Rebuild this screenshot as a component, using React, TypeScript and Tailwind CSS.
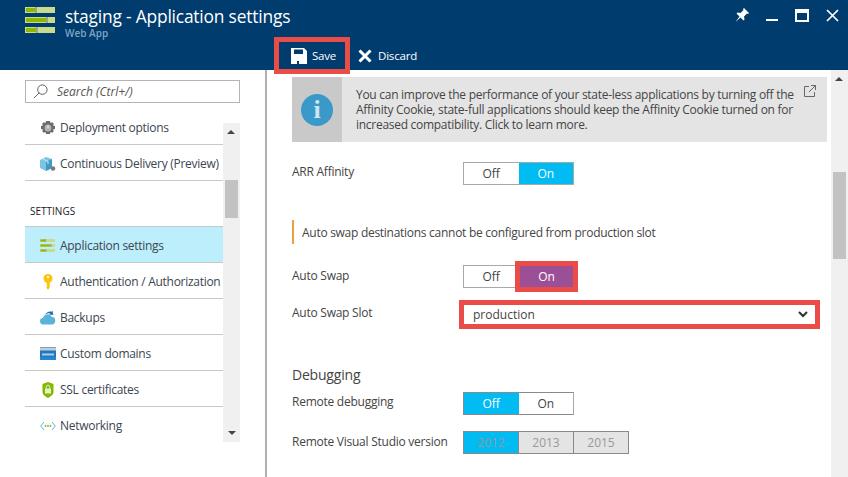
import { ReactNode } from "react";

const FONT = "font-['Open_Sans','Noto_Sans',sans-serif]";

function BarsIcon({ className }: { className: string }) {
    return (
        <svg viewBox="0 0 30 26" className={className}>
            <rect x="0" y="0" width="30" height="6" fill="#c9dc8e" />
            <rect x="1" y="1" width="9" height="4" fill="#8cb800" />
            <rect x="10" y="0" width="2" height="6" fill="#9aa58a" />
            <rect x="0" y="10" width="30" height="6" fill="#c9dc8e" />
            <rect x="1" y="11" width="20" height="4" fill="#8cb800" />
            <rect x="21" y="10" width="2" height="6" fill="#9aa58a" />
            <rect x="0" y="20" width="30" height="6" fill="#c9dc8e" />
            <rect x="1" y="21" width="10" height="4" fill="#8cb800" />
            <rect x="11" y="20" width="2" height="6" fill="#9aa58a" />
        </svg>
    );
}

function GearIcon() {
    return (
        <svg viewBox="0 0 16 16" className="w-[16px] h-[16px]">
            <path
                d="M6 1h4l.5 2 1.8-.8 1.5 1.5-.8 1.8 2 .5v3l-2 .5.8 1.8-1.5 1.5-1.8-.8-.5 2H6l-.5-2-1.8.8-1.5-1.5.8-1.8-2-.5v-3l2-.5-.8-1.8 1.5-1.5 1.8.8z"
                fill="#6b6b6b"
            />
            <circle cx="8" cy="8" r="3.4" fill="#b4b4b4" />
            <path d="M8 5.500v2.500" stroke="#fff" strokeWidth="1" />
        </svg>
    );
}

function BoxIcon() {
    return (
        <svg viewBox="0 0 16 16" className="w-[16px] h-[16px]">
            <path d="M0 4l6-3 6 2v9l-6 3-6-3z" fill="#7cc4e2" />
            <path d="M6 6l6-3v9l-6 3z" fill="#3e9ac6" />
            <path d="M3 3l5 2.500v2.500" stroke="#d2ecf7" strokeWidth="1" fill="none" />
            <circle cx="13" cy="12.500" r="2.300" fill="#7a7a7a" />
        </svg>
    );
}

function KeyIcon() {
    return (
        <svg viewBox="0 0 16 16" className="w-[16px] h-[16px]">
            <circle cx="8" cy="4.500" r="4.500" fill="#fcc40f" />
            <circle cx="8" cy="3" r="1.100" fill="#fff" />
            <path d="M6.300 7h3.400v6.500L8 16l-1.700-2.500 1-1.200-1-1.100 1-1.100-1-1.100z" fill="#fcc40f" />
        </svg>
    );
}

function CloudIcon() {
    return (
        <svg viewBox="0 0 16 16" className="w-[16px] h-[16px]">
            <path
                d="M3.500 14.500a3.200 3.200 0 0 1-.5-6.400 4.600 4.600 0 0 1 8.600-1.300 3.900 3.900 0 0 1 .6 7.700z"
                fill="#59b4d9"
            />
            <path d="M5 5c1-2.500 4-4 6.500-3.300l1-1 .8 4.300-4.200-.6 1-1C8.500 3 6.500 3.500 5 5z" fill="#1f6fb2" />
        </svg>
    );
}

function DomainIcon() {
    return (
        <svg viewBox="0 0 16 13" className="w-[16px] h-[13px]">
            <rect width="16" height="13" fill="#1e78c4" />
            <rect y="0.500" width="16" height="3" fill="#c8ccd0" />
            <rect x="2" y="6.500" width="12" height="2" fill="#a9cfe9" />
            <rect y="10" width="16" height="3" fill="#2487d0" />
        </svg>
    );
}

function ShieldIcon() {
    return (
        <svg viewBox="0 0 14 16" className="w-[14px] h-[16px]">
            <path d="M1.500 2 7 0l5.500 2v8c0 3-3 4.500-5.500 6-2.500-1.500-5.500-3-5.500-6z" fill="#7fba00" />
            <rect x="4" y="6.500" width="6" height="5" fill="#e8f3c8" />
            <path d="M5.200 6.500V5a1.800 1.800 0 0 1 3.600 0v1.500" stroke="#e8f3c8" fill="none" />
        </svg>
    );
}

function NetworkIcon() {
    return (
        <svg viewBox="0 0 16 10" className="w-[16px] h-[10px]">
            <path d="M4 1 .7 5 4 9M12 1l3.300 4L12 9" stroke="#59b4d9" fill="none" />
            <circle cx="5.500" cy="5" r="0.900" fill="#7fba00" />
            <circle cx="8" cy="5" r="0.900" fill="#7fba00" />
            <circle cx="10.500" cy="5" r="0.900" fill="#7fba00" />
        </svg>
    );
}

function MenuRow({
    icon,
    label,
    selected,
    last,
    short,
}: {
    icon: ReactNode;
    label: string;
    selected?: boolean;
    last?: boolean;
    short?: boolean;
}) {
    return (
        <div
            className={`flex items-center shrink-0 pt-[2px] ${short ? "h-[35px]" : "h-[36px]"} ${
                last ? "" : "border-b border-[#c8c8c8]"
            } ${selected ? "bg-[#bdeefb]" : ""}`}>
            <span className="w-[35px] pl-[10px] flex justify-center shrink-0">{icon}</span>
            <span className="text-[12px] text-[#3c4650] tracking-[-0.28px] whitespace-nowrap">{label}</span>
        </div>
    );
}

function Scrollbar({ className, thumb }: { className: string; thumb: string }) {
    return (
        <div className={`relative w-[17px] shrink-0 bg-[#f0f0f0] ${className}`}>
            <span className="absolute left-[4px] top-[7px] w-0 h-0 border-x-[4px] border-x-transparent border-b-[4px] border-b-[#444]" />
            <span className={`absolute left-[2px] w-[13px] bg-[#c2c2c2] ${thumb}`} />
        </div>
    );
}

function Segments({ items, active, disabled }: { items: string[]; active: number; disabled?: boolean }) {
    return (
        <div
            className={`flex h-[23px] border ${disabled ? "w-[166px] border-[#8a8a8a]" : "w-[111px]"} ${
                !disabled && active === 0 ? "border-[#8a8a8a] border-r-[#a8a8a8]" : !disabled ? "border-[#a8a8a8]" : ""
            }`}>
            {items.map((item, i) => (
                <div
                    key={item}
                    className={`flex-1 flex items-center justify-center text-[12px] ${i > 0 && disabled ? "border-l border-[#8a8a8a]" : ""} ${
                        i === active
                            ? `bg-[#00bcf2] ${disabled ? "text-[#8f9aa0]" : "text-white"}`
                            : disabled
                              ? "bg-[#e4e4e4] text-[#999]"
                              : "bg-white text-[#444]"
                    }`}>
                    {item}
                </div>
            ))}
        </div>
    );
}

function SettingRow({
    label,
    className,
    labelClass = "",
    children,
}: {
    label: string;
    className: string;
    labelClass?: string;
    children: ReactNode;
}) {
    return (
        <div className={`flex ${className}`}>
            <div className={`w-[171px] shrink-0 text-[12px] text-[#444] tracking-[-0.25px] leading-[20px] ${labelClass}`}>
                {label}
            </div>
            {children}
        </div>
    );
}

export default function App() {
    return (
        <div className={`w-[848px] h-[477px] overflow-hidden flex flex-col bg-white ${FONT}`}>
            <header className="relative h-[70px] shrink-0 bg-[#003c6e] text-white">
                <div className="flex pl-[25px] pt-[7px]">
                    <BarsIcon className="w-[30px] h-[26px]" />
                    <div className="ml-[10px] -mt-[1px]">
                        <div className="text-[17.4px] leading-[20px] tracking-[-0.2px]">staging - Application settings</div>
                        <div className="text-[10px] leading-[14px] text-[#7fa5c4] font-semibold">Web App</div>
                    </div>
                </div>
                <div className="absolute right-[9px] top-[8px] flex items-center gap-[17px]">
                    <svg viewBox="0 0 14 14" className="w-[14px] h-[14px]">
                        <path d="M9 0l5 5-1 1-1-.5-3 3 .5 3-1 1-3-3-5 4.500 4-5.500-3-3 1-1 3 .5 3-3L8 1z" fill="#fff" />
                    </svg>
                    <svg viewBox="0 0 12 14" className="w-[12px] h-[14px]">
                        <rect y="11" width="12" height="2" fill="#fff" />
                    </svg>
                    <svg viewBox="0 0 14 13" className="w-[14px] h-[13px]">
                        <rect x="1" y="1" width="12" height="11" fill="none" stroke="#fff" strokeWidth="2" />
                        <rect x="1" y="1" width="12" height="3" fill="#fff" />
                    </svg>
                    <svg viewBox="0 0 13 13" className="w-[13px] h-[13px]">
                        <path d="M1 1l11 11M12 1 1 12" stroke="#fff" strokeWidth="1.700" />
                    </svg>
                </div>
                <div className="absolute left-[274px] top-[37px] flex items-center">
                    <div className="w-[76px] h-[37px] border-[5px] border-[#ea4c47] flex items-center pl-[12px] gap-[5px]">
                        <svg viewBox="0 0 16 16" className="w-[16px] h-[16px]">
                            <path
                                fillRule="evenodd"
                                d="M0 0h13l3 3v13H0zM3 1.500v4.500h9V1.500zM6 13v3h2v-3z"
                                fill="#fff"
                            />
                        </svg>
                        <span className="text-[11.5px] font-medium tracking-[-0.2px]">Save</span>
                    </div>
                    <div className="flex items-center ml-[8px] gap-[6px]">
                        <svg viewBox="0 0 14 14" className="w-[14px] h-[14px]">
                            <path d="M1.500 1.500l11 11M12.500 1.500l-11 11" stroke="#fff" strokeWidth="3" />
                        </svg>
                        <span className="text-[11.5px] font-medium tracking-[-0.2px]">Discard</span>
                    </div>
                </div>
            </header>

            <div className="flex flex-1 min-h-0">
                <aside className="relative w-[267px] shrink-0 border-r-2 border-[#b0b0b0] pl-[25px] pr-[25px]">
                    <div className="mt-[10px] h-[23px] border border-[#b4b4b4] flex items-center pl-[7px] gap-[9px]">
                        <svg viewBox="0 0 16 16" className="w-[15px] h-[15px]">
                            <circle cx="10" cy="6" r="5" fill="none" stroke="#555" />
                            <path d="M6.500 9.500 1 15" stroke="#555" />
                        </svg>
                        <span className="text-[12px] italic text-[#555]">Search (Ctrl+/)</span>
                    </div>
                    <div className="flex h-[332px] mt-[7px]">
                        <div className="w-[198px] flex flex-col">
                            <MenuRow short icon={<GearIcon />} label="Deployment options" />
                            <MenuRow icon={<BoxIcon />} label="Continuous Delivery (Preview)" />
                            <div className="h-[46px] border-b border-[#c8c8c8] pl-[5px] pt-[23px] text-[10px] leading-[14px] text-[#222] shrink-0">
                                SETTINGS
                            </div>
                            <MenuRow selected icon={<BarsIcon className="w-[15px] h-[13px]" />} label="Application settings" />
                            <MenuRow icon={<KeyIcon />} label="Authentication / Authorization" />
                            <MenuRow icon={<CloudIcon />} label="Backups" />
                            <MenuRow icon={<DomainIcon />} label="Custom domains" />
                            <MenuRow icon={<ShieldIcon />} label="SSL certificates" />
                            <MenuRow last icon={<NetworkIcon />} label="Networking" />
                        </div>
                        <Scrollbar className="mt-[13px]" thumb="top-[57px] h-[38px]" />
                        <span className="absolute left-[228px] top-[361px] w-0 h-0 border-x-[4px] border-x-transparent border-t-[4px] border-t-[#444]" />
                    </div>
                </aside>

                <main className="flex-1 min-w-0 pl-[25px] pr-[4px] pt-[7px]">
                    <div className="relative flex h-[65px] bg-[#e4e4e4]">
                        <div className="w-[50px] bg-[#c9c9c9] flex items-center justify-center shrink-0">
                            <div className="w-[32px] h-[32px] rounded-full bg-[#3b99c9] flex items-center justify-center text-[#cfe5f1] font-['Liberation_Serif',serif] font-bold text-[26px]">
                                i
                            </div>
                        </div>
                        <p className="ml-[14px] mt-[10px] w-[460px] text-[12px] leading-[15px] text-[#444] tracking-[-0.28px]">
                            You can improve the performance of your state-less applications by turning off the
                            Affinity Cookie, state-full applications should keep the Affinity Cookie turned on for
                            increased compatibility. Click to learn more.
                        </p>
                        <svg viewBox="0 0 12 12" className="absolute right-[11px] top-[8px] w-[12px] h-[12px]">
                            <path d="M5 1.500H.5v10h10V7M7 .5h4.500V5M11.500.5 5 7" fill="none" stroke="#666" />
                        </svg>
                    </div>

                    <SettingRow label="ARR Affinity" className="mt-[20px]">
                        <Segments items={["Off", "On"]} active={1} />
                    </SettingRow>

                    <div className="mt-[35px] h-[24px] border-l-2 border-[#e8a33d] pl-[8px] pt-[2px] flex items-center text-[12px] text-[#444] tracking-[-0.28px]">
                        Auto swap destinations cannot be configured from production slot
                    </div>

                    <SettingRow label="Auto Swap" labelClass="pt-[1px]" className="mt-[21px]">
                        <div className="relative">
                            <Segments items={["Off", "On"]} active={1} />
                            <div className="absolute left-[52px] -top-[4px] w-[63px] h-[31px] border-[5px] border-[#ea4c47] bg-[#9b4f96] flex items-center justify-center text-[12px] text-white">
                                On
                            </div>
                        </div>
                    </SettingRow>

                    <SettingRow label="Auto Swap Slot" labelClass="pt-[3px]" className="mt-[12px]">
                        <div className="-ml-[4px] w-[361px] h-[29px] border-[5px] border-[#ea4c47] flex items-center justify-between pl-[9px] pr-[7px] text-[12px] text-[#444]">
                            production
                            <svg viewBox="0 0 10 7" className="w-[10px] h-[7px]">
                                <path d="M1 1l4 4 4-4" fill="none" stroke="#2b2f38" strokeWidth="2" />
                            </svg>
                        </div>
                    </SettingRow>

                    <div className="mt-[36px] text-[14px] leading-[20px] text-[#444] tracking-[-0.2px]">Debugging</div>

                    <SettingRow label="Remote debugging" className="mt-[7px]">
                        <Segments items={["Off", "On"]} active={0} />
                    </SettingRow>

                    <SettingRow label="Remote Visual Studio version" labelClass="pt-[1px]" className="mt-[16px]">
                        <Segments disabled items={["2012", "2013", "2015"]} active={0} />
                    </SettingRow>
                </main>

                <Scrollbar className="" thumb="top-[102px] h-[87px]" />
            </div>
        </div>
    );
}
